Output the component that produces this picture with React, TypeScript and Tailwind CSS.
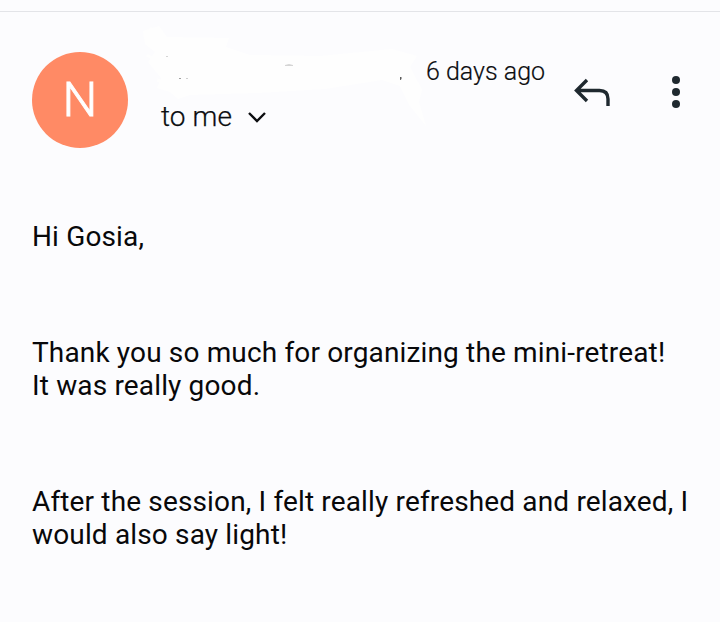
const paragraphs = [
  ['Hi Gosia,'],
  ['Thank you so much for organizing the mini-retreat!', 'It was really good.'],
  ['After the session, I felt really refreshed and relaxed, I', 'would also say light!'],
];

// white brush strokes covering the sender name
function ErasedName() {
  return (
    <svg viewBox="0 0 310 130" className="absolute -left-[31px] top-2 h-[130px] w-[310px]" fill="none">
      <path
        d="M13 11L29 6L37 17L99 18L96 27L120 35L190 36L262 29L287 36L280 47L288 62L292 70L289 82L296 106L280 86L270 66L252 60L195 69L128 73L60 75L48 79L40 72L27 68L31 58L18 42L25 32L15 24Z"
        fill="#fefefe"
      />
      <path d="M14 15l13 7M20 8l10 14M17 35l14 8M27 60l17 5" stroke="#fefefe" strokeWidth="3" />
      <g fill="#777">
        <rect x="49" y="58" width="2" height="1" opacity="0.7" />
        <rect x="56" y="58" width="2" height="1" opacity="0.35" />
        <rect x="36" y="36" width="2" height="1" opacity="0.3" />
        <path d="M155 45l4-1 4 1v1h-8z" opacity="0.3" />
        <path d="M270 57h1.5v2l-1 1h-.5z" fill="#333" opacity="0.8" />
      </g>
    </svg>
  );
}

function Header() {
  return (
    <header className="flex h-[159px] border-t border-[#e3e4e8] pl-8 text-[#0c0d10]">
      <div className="mt-10 flex size-24 items-center justify-center rounded-full bg-[#ff8a65] text-[49px] font-light text-white [-webkit-text-stroke:0.8px_white]">
        N
      </div>
      <div className="relative ml-[33px] h-[130px] w-[265px]">
        <ErasedName />
        <div className="relative mt-[87px] flex h-9 items-center text-[28px] font-light [-webkit-text-stroke:0.25px]">
          <span className="w-[70px] whitespace-nowrap tracking-[0.1px]">to me</span>
          <svg viewBox="0 0 20 12" className="-mt-px ml-4 h-3 w-5" fill="none" stroke="currentColor" strokeWidth="2.4">
            <path d="M2 2l8 8 8-8" />
          </svg>
        </div>
      </div>
      <time className="mt-[44px] h-8 w-[148px] whitespace-nowrap text-[25px] font-light leading-8 [-webkit-text-stroke:0.2px]">
        6 days ago
      </time>
      <svg viewBox="0 0 36 28" className="mt-[66px] h-7 w-9" fill="none" stroke="#1f292f" strokeWidth="3.4">
        <path d="M13 2L2.5 12.5 13 23M2.5 12.5H25.5q8.5 0 8.5 8.5v7" />
      </svg>
      <svg viewBox="0 0 8 32" className="ml-[62px] mt-16 h-8 w-2" fill="#1f292f">
        <circle cx="4" cy="4" r="4" />
        <circle cx="4" cy="16" r="4" />
        <circle cx="4" cy="28" r="4" />
      </svg>
    </header>
  );
}

export default function App() {
  return (
    <div className="h-[622px] w-[720px] overflow-hidden bg-[#fcfcfe] pt-[11px] font-['Roboto',sans-serif]">
      <Header />
      <main className="flex flex-col gap-[83px] pl-8 pt-[50px] text-[28px] leading-[33px] tracking-[0.15px] text-[#08080a]">
        {paragraphs.map((lines) => (
          <p key={lines[0]}>
            {lines.map((line) => (
              <span key={line} className="block whitespace-nowrap">{line}</span>
            ))}
          </p>
        ))}
      </main>
    </div>
  );
}
